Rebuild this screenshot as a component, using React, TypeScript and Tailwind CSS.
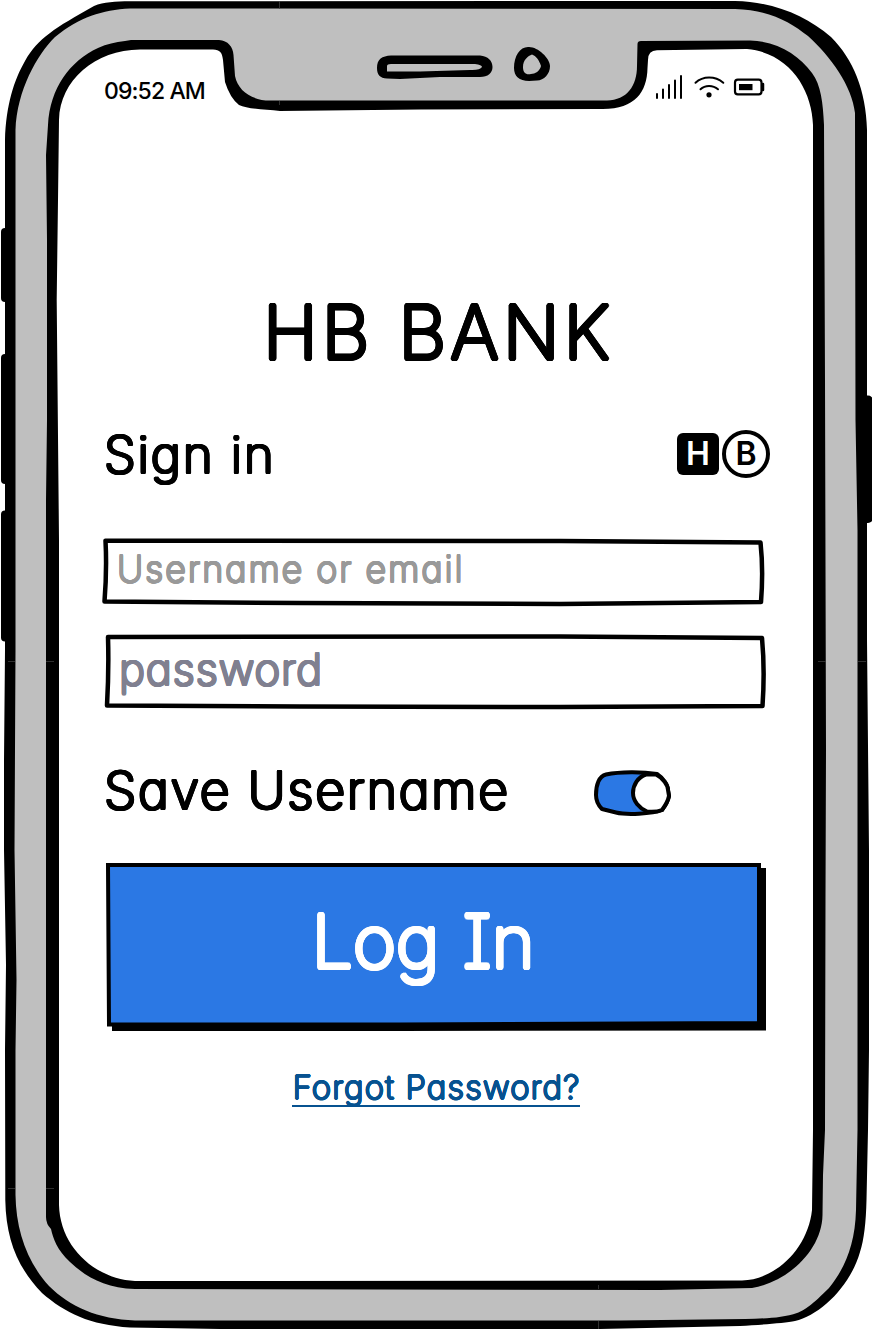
import type { ReactNode } from "react";

const hand =
  "block whitespace-nowrap font-['Inter',sans-serif] [font-feature-settings:'cv11','cv08']";

// Offset copies of a thin weight give the letters marker-like rounded ends.
const marker =
  "font-extralight [text-shadow:0.028em_0_0_currentColor,0.024em_0.014em_0_currentColor,0.014em_0.024em_0_currentColor,0_0.028em_0_currentColor,-0.014em_0.024em_0_currentColor,-0.024em_0.014em_0_currentColor,-0.028em_0_0_currentColor,-0.024em_-0.014em_0_currentColor,-0.014em_-0.024em_0_currentColor,0_-0.028em_0_currentColor,0.014em_-0.024em_0_currentColor,0.024em_-0.014em_0_currentColor]";

function Hand({ className, children }: { className: string; children: ReactNode }) {
  return <span className={`${hand} ${marker} ${className}`}>{children}</span>;
}

function PhoneFrame() {
  return (
    <svg className="absolute inset-0" width="872" height="1330" viewBox="0 0 872 1330" aria-hidden="true">
      <rect x="1" y="228" width="12" height="74" rx="4" />
      <rect x="1" y="354" width="12" height="130" rx="4" />
      <rect x="1" y="510.500" width="12" height="131" rx="4" />
      <rect x="856" y="395.500" width="17" height="127.500" rx="5" />
      <path d="M5 140C6 105 14 80 25 61C38 38 55 28 94 6C104 2 115 1.500 130 1.300L735 1C775 2 806 16 831 37C853 59 866 90 867 130L867 640L869 850L869 1050L868 1130L866.500 1200C866 1222 864 1240 860 1252C850 1287 820 1315 795 1321C785 1323 760 1325 740 1326L600 1329L220 1329L130 1327.500C90 1325 65 1313 42 1293C18 1268 6 1240 5.300 1200L5 1050L6 965L4 850L4 760L5 650Z" />
      <path fill="#bfbfbf" d="M15.500 130C17 90 37 55 55 37C80 17 102 10 130 8.500L735 9C770 10 790 22 808 36C831 57 852 86 855 113L855.500 420L857.500 530L857.500 1130L856 1210C855 1245 845 1268 829 1288C812 1305 805 1310 797 1313C783 1318 765 1318.500 745 1319L620 1320.500L135 1320.500C98 1319 70 1307 49 1286C27 1262 16 1230 15.500 1195L15.500 1050L16.500 980L14.500 850L15.500 650Z" />
      <path d="M48 125C50 88 70 61 98 48C107 44 115 42 125 41L131 40L219 40C228 40.500 233 47 233.500 55L235 76C238 91 252 100.500 270 100.500L607 100.500C627 100 637 86 637 66L637.500 44Q637.500 41 641 41L750 40.500C777 41 799 55 812 73C821 85 823 103 824 125L825 380L826 750L825.500 900L825 1130L823 1175L822.500 1215C822 1250 788 1282 752 1288L660 1290L135 1289C105 1288 86 1277 70 1262C57 1250 53 1238 51 1229Q46 1224 46 1217L46 500L47 420L47 240L46 155Z" />
      <path fill="#fff" d="M59 120C60 80 95 50 140 49.500L213 49.500C220 50 222 52 223 60L225 82Q230 98 239 105C247 109 265 109.500 280 111L420 109.500L603 109C635 109 647 92 647.500 68L648 60Q648 50.500 657 50.300L747 49C790 53 812 90 813 125L813 1130L812 1210C808 1247 778 1279 742 1280.500L135 1281C95 1279 60 1247 59 1205L59 540L56.700 300L58 200Z" />
      <path fillRule="evenodd" d="M377 68C377 59 382 56 391 55.500L480 55.500C488 56 492.500 61 492.500 67C492.500 73 488 77 480 77L440 77L400 79L387 78.500C380 78 377 75 377 68ZM387 71L387 66Q387 64 391 64L475 64Q482 65 482 67Q480 70.500 470 70L420 71.500L387 71.500Z" />
      <path fillRule="evenodd" d="M514 68C514 56 520 47 528 47C537 46 550 58 550 66C550 74 544 80.500 537 80.500L529 81C519 81 514 76 514 68ZM523 67C523 60 528 56 532 54.500C536 56 539 60 541 66C540 71 535 74 531 74C526 75 523 73 523 67Z" />
      <path stroke="#444" strokeWidth=".7" d="M279.500 1v8M279.500 101v4M8 661.500h7M46 661.500h8M818 661.500h8M858 661.500h8M8 1188.500h7M46 1188.500h8M598.500 1285v4M598.500 1321v8" />
    </svg>
  );
}

function StatusIcons() {
  return (
    <svg className="-mt-1.5 mr-[3px]" width="110" height="26" viewBox="655 74 110 26" fill="none" stroke="#000" strokeWidth="2" strokeLinecap="round" aria-hidden="true">
      <path d="M657 94v4M663 89.500v8.500M669 85v13M675 80.500v17.500M681 76v22" />
      <path d="M695.500 82.800C703 75.800 715 75.800 723.300 82.800M700.500 89.300C705 84.800 713 84.800 718 89.300" />
      <circle cx="709" cy="94.800" r="2.600" fill="#000" stroke="none" />
      <rect x="735" y="79.700" width="26.500" height="14.600" rx="2.800" strokeWidth="2.200" />
      <path d="M763 84v6" strokeWidth="2.500" />
      <rect x="739" y="84" width="13.500" height="6.200" fill="#000" stroke="none" />
    </svg>
  );
}

function Logo() {
  return (
    <div className="flex items-center gap-[3px]">
      <div className="flex size-[42px] items-center justify-center rounded-[6px] bg-black font-['Inter',sans-serif] text-[32px] leading-none font-semibold text-white">H</div>
      <div className="flex size-[48px] items-center justify-center rounded-full border-[4.500px] border-black font-['Inter',sans-serif] text-[32px] leading-none font-semibold text-black">B</div>
    </div>
  );
}

function Toggle() {
  return (
    <svg className="mt-1" width="80" height="48" viewBox="0 0 80 48" stroke="#000" strokeWidth="4" strokeLinejoin="round" aria-hidden="true">
      <path fill="#2b78e4" d="M4 27C4 17 7 8 14 6.500C28 3.500 50 3.500 65 6C71 10 76 17 76 22L77 28C76 33 73 38 70 42C60 46 34 47 24 44.500L10 41C6 37 4 32 4 27Z" />
      <path fill="#fff" d="M54 6.500L64 6.500C71 10 76 17 76 22L77 28C76 33 73 38 70 42C65 44 60 44 55 43.500C47 40 41 33 41 25C41 17 46 9 54 6.500Z" />
    </svg>
  );
}

export default function App() {
  return (
    <div className="relative h-[1330px] w-[872px] overflow-hidden bg-white text-black">
      <PhoneFrame />
      <main className="relative flex flex-col px-[104px] pt-[78px]">
        <div className="flex h-6 items-center justify-between">
          <span className={`${hand} mt-0.5 text-[23px] leading-6 font-medium tracking-[-0.9px]`}>09:52 AM</span>
          <StatusIcons />
        </div>
        <h1 className="mt-[190px] flex h-20 justify-center pl-[5px]">
          <Hand className="text-[74px] leading-[80px] tracking-[4.1px]">HB BANK</Hand>
        </h1>
        <div className="mt-[52px] -mr-0.5 flex h-[60px] items-center justify-between">
          <Hand className="mt-0.5 text-[51px] leading-[60px] tracking-[1.8px]">Sign in</Hand>
          <Logo />
        </div>
        <div className="relative mt-[54px] h-[68px] pl-[13px]">
          <svg className="absolute inset-0" width="664" height="68" viewBox="104 538 664 68" overflow="visible" fill="none" stroke="#000" strokeWidth="4.500" strokeLinejoin="round" aria-hidden="true">
            <path d="M105.500 540.700L560 541L760.500 542.500Q763.500 570 761 602L560 604L300 603L104.500 601.500Q107 570 105.500 540.700Z" />
          </svg>
          <Hand className="text-[36px] leading-[62px] tracking-[1.9px] text-[#999999]">Username or email</Hand>
        </div>
        <div className="relative mt-[27px] h-[78px] pl-[15px]">
          <svg className="absolute inset-0" width="664" height="78" viewBox="104 633 664 78" overflow="visible" fill="none" stroke="#000" strokeWidth="4.500" strokeLinejoin="round" aria-hidden="true">
            <path d="M108 637L560 636.500L762 638Q765 670 762.500 706L560 707L300 706.500L107 705.500Q109 670 108 637Z" />
          </svg>
          <Hand className="text-[44px] leading-[73px] tracking-[0.8px] text-[#808090]">password</Hand>
        </div>
        <div className="mt-[49px] flex h-[60px] items-center">
          <Hand className="mt-0.5 w-[488px] text-[52px] leading-[60px] tracking-[1.7px]">Save Username</Hand>
          <Toggle />
        </div>
        <button className="relative mt-[42px] flex h-[170px] justify-center pt-[39px] pr-[26px]">
          <svg className="absolute inset-0" width="664" height="170" viewBox="104 862 664 170" aria-hidden="true">
            <path d="M113 868H766V1030.500L400 1031L112 1031Z" />
            <path fill="#2b78e4" stroke="#000" strokeWidth="4" d="M108 865L759 865V1023L400 1024.500L109 1024.500Z" />
          </svg>
          <Hand className="relative text-[74px] leading-[80px] tracking-[-0.4px] text-white [word-spacing:3px]">Log In</Hand>
        </button>
        <a className="mt-[35px] flex justify-center text-[#075290]">
          <Hand className="h-10 border-b-2 pl-px text-[33px] leading-10 tracking-[1.1px]">Forgot Password?</Hand>
        </a>
      </main>
    </div>
  );
}
